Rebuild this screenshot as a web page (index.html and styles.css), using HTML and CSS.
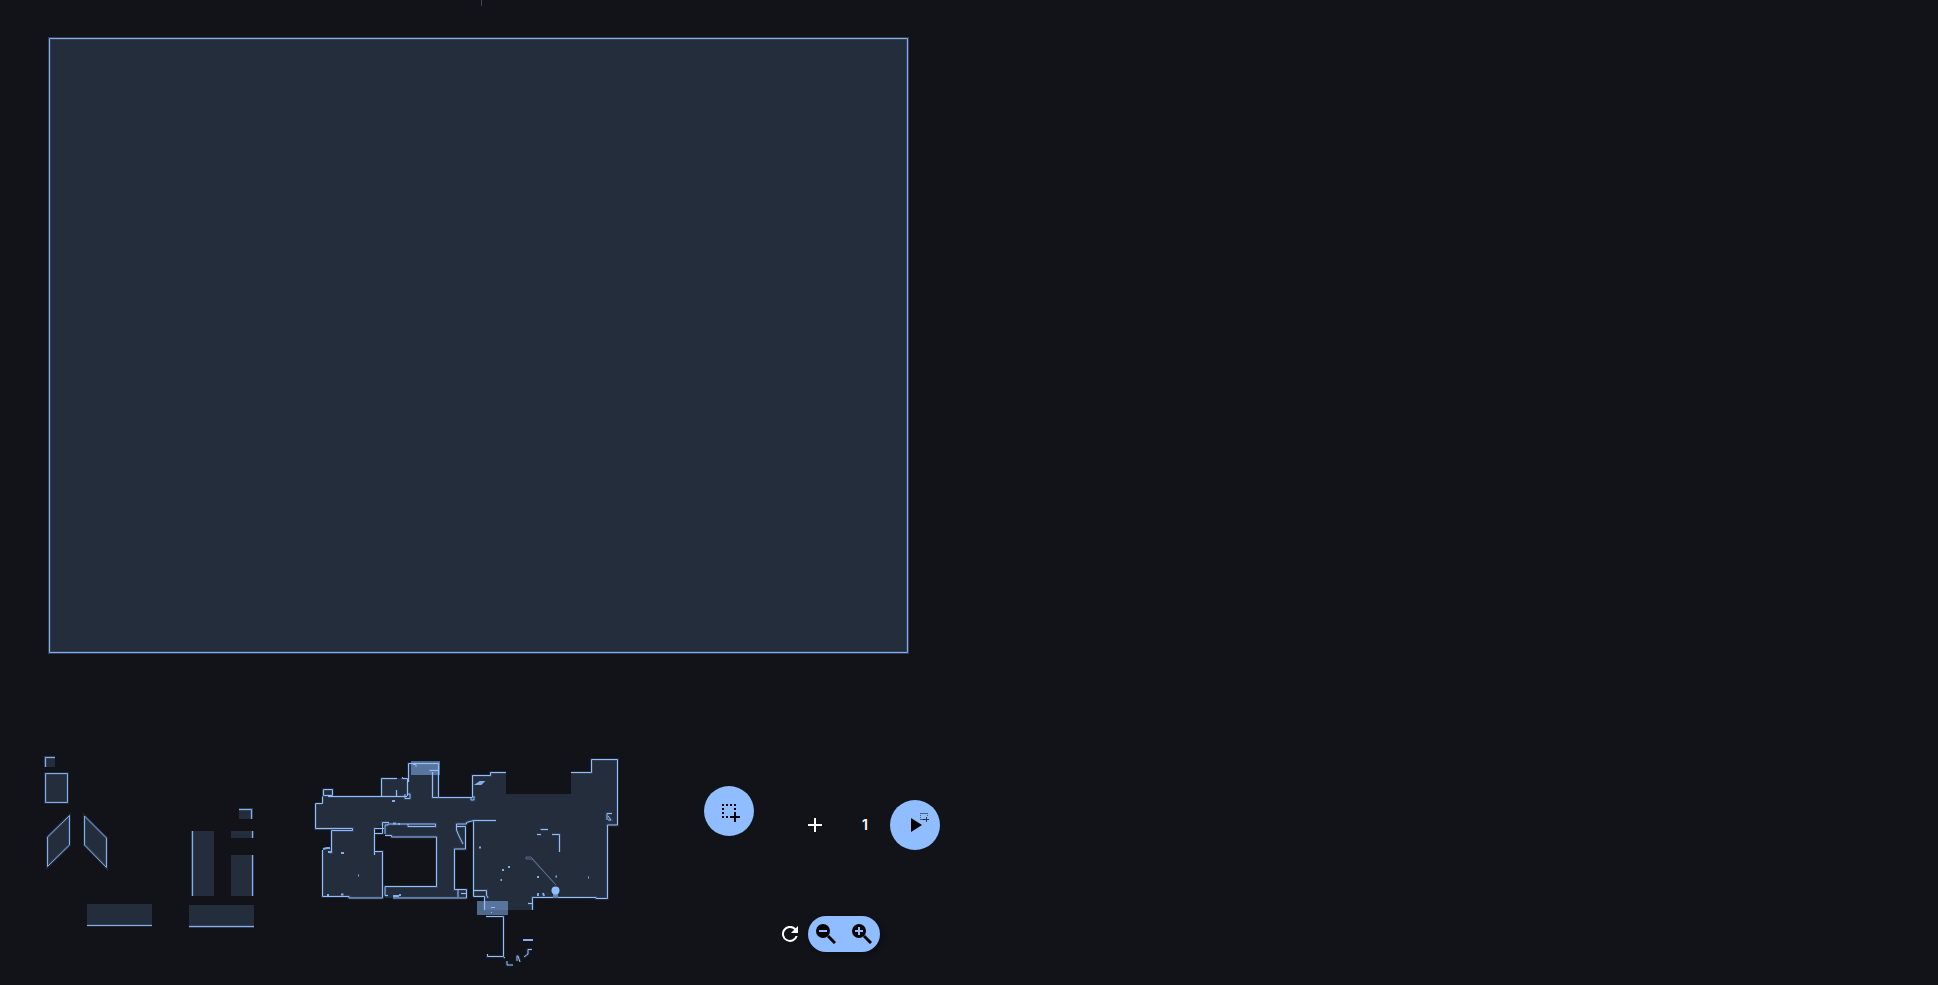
FILE: index.html
```html
<!DOCTYPE html>
<html lang="en">
<head>
<meta charset="utf-8">
<title>Floor map</title>
<link rel="stylesheet" href="styles.css">
</head>
<body>
<main class="viewer">
<svg class="map" role="img" aria-label="Floor map">
  <defs>
    <g id="zones">
      <path d="M49.5 38.5H907.5V652.5H49.5Z"/>
      <path d="M45.5 767V757.5H55M45.5 773.5H67.5V802.5H45.5Z"/>
      <path d="M69.5 815.5V845L47.5 866.5V837ZM84.5 816L106.5 838V867.5L84.5 845Z"/>
      <path d="M87 925.5H152M189 926.5H254M192.5 831V896M252.5 831V838M252.5 855V896M239 809.5H251.5V819"/>
    </g>
    <g id="walls">
      <path d="M328 796.5H407M322.5 803.5V796.5M323.5 789.5H332.5V795.5H323.5ZM315.5 803.5H322.5M315.5 803.5V828.5H352.5V830.5H331.5V852.5H329M322.5 850V896.5H349V898H382.5V851.5H374.5M374.5 855V828.5H384M374.5 833.5H382.5V822.5H389"/>
      <path d="M381.5 796V778.5H397M402.5 777V778.5H407.5V796M396.5 790V796M405 794V798.5H410V794H407M408.5 782V763.5H438.5V797.5H472.5V775.5H490.5V772.5H506M432.5 772V797.5H438M429.5 770.5H438M471 797V800H474V796"/>
      <path d="M571 772.5H591.5V759.5H617.5V825H607.5V898.5H596V897.5H532.5V910M473.5 896.5V820.5H496M473.5 820.5L466.5 822.5V824H456.5V830L459 836L463 844M457 826.5H465.5V849H454.5V889.5H466.5V898H393M458 890V897M461 893.5H466"/>
      <path d="M385 834V825H388V824H435.5V826.5H408V824M385 835.5H391.5V837H436.5V886.5H385V895.5H388"/>
      <path d="M473.5 890.5H486.5V895L488 898M473.5 896.5H484.5V910M552 834.5H559.5V852M541 830V829.5H548M537 834.5H541M528 903.5H533M486 916.5H503.5V956.5H487.5V954M503.5 957L505 958M507 961V965H513M517 961V956H518L520 962M524 957L528 954V949.5H532M607 820V813.5H612M608 816L611 820H608"/>
    </g>
  </defs>
  <g class="fill">
    <path d="M48 37H909V654H48ZM44 756H55V767H44ZM45 773H68V803H45ZM70 815V845L47 867V837ZM84 816L107 838V868L84 845ZM87 904H152V926H87ZM189 905H254V928H189ZM191 831H214V896H191ZM231 831H254V838H231ZM231 855H254V896H231ZM239 808H253V819H239Z"/>
    <path d="M315 803H322V790H332V796H381V778H408V763H439V797H472V775H490V772H506V794H571V772H591V759H618V825H608V898H596V897H533V910H484V897H473V821L466 824V849H454V889H467V898H385V886H436V837H392V835H385V825L374 828V851H383V898H349V896H322V850L331 848V830H315Z"/>
  </g>
  <use href="#zones" class="halo"/><use href="#walls" class="halo"/>
  <use href="#zones" class="line"/><use href="#walls" class="wall"/>
  <g class="overlay"><path d="M411 761H440V775H411ZM477 901H508V915H477Z"/></g>
  <path class="wall" d="M413 764.5H416V767M491 907.5H495M491 912.5H492"/>
  <path class="light" d="M393 823.5H396M398 824H400M341 853H344M341 894.5H343.5M328 894V896M323 849L327 848H330M328 852H331M392 801H395M358 875.5H359M477 784L480 782H483L481 784ZM503 869V871M509 866V868M538 876V878M538 893V896M543 893L544 896M479 847.5H481M500.5 880H502M555.5 876.5H557M588 877.5H589M393 896H399M400 894V896M523 940H533"/>
  <path class="trail" d="M556 885L531 857H526V859H532L555 884"/>
  <path class="base" d="M553 892H558V898H553Z"/>
  <circle class="robot" cx="555.5" cy="890.5" r="4"/>
  <path class="tick" d="M481.5 0V6"/>
</svg>
<button class="round area" aria-label="Select area">
<svg viewBox="0 0 18 18" width="18" height="18"><path d="M0 0h2v2H0zM4 0h2v2H4zM8 0h2v2H8zM12 0h2v2h-2zM0 4h2v2H0zM12 4h2v2h-2zM0 8h2v2H0zM12 8h2v10h-2zM0 12h2v2H0zM4 12h2v2H4zM8 12h10v2H8z"/></svg>
</button>
<div class="run">
<button class="plain" aria-label="Add repeat"><svg viewBox="0 0 14 14" width="14" height="14"><path d="M6 0h2v6h6v2H8v6H6V8H0V6h6z"/></svg></button>
<output class="count">1</output>
<button class="round" aria-label="Start area cleaning"><svg viewBox="0 0 50 50" width="50" height="50"><path d="M21 18l11 7-11 7z"/><g class="faint"><path d="M30 13h8v1h-8zM30 15h1v1h-1zM30 17h1v1h-1zM37 15h1v1h-1zM30 19h5v1h-5z"/></g><path d="M36 17h1v2h2v1h-2v2h-1v-2h-3v-1h3z" opacity=".7"/></svg></button>
</div>
<div class="tools">
<button class="plain" aria-label="Reset view"><svg viewBox="0 0 16 16" width="16" height="16"><path d="M13.7 2.3A8 8 0 1 0 15.7 10h-2.1A6 6 0 1 1 12.2 3.8L9 7h7V0z"/></svg></button>
<div class="zoom">
<button class="plain" aria-label="Zoom out"><svg viewBox="0 0 20 20" width="20" height="20"><circle cx="7" cy="7" r="7"/><path class="stem" d="M12 12l7 7"/><path class="sign" d="M3 7h8"/></svg></button>
<button class="plain" aria-label="Zoom in"><svg viewBox="0 0 20 20" width="20" height="20"><circle cx="7" cy="7" r="7"/><path class="stem" d="M12 12l7 7"/><path class="sign" d="M3 7h8M7 3v8"/></svg></button>
</div>
</div>
</main>
</body>
</html>
```
FILE: styles.css
```css
body { margin: 0; background: #111318; color: #fff; font-family: Inter, "Noto Sans", sans-serif; }
.viewer { position: relative; height: 100vh; overflow: hidden; }
.map { display: block; width: 100%; height: 100%; fill: none; }
.fill { fill: #242d3b; }
.halo { stroke: #8fbdff; stroke-opacity: .13; stroke-width: 3; }
.line { stroke: #80aeeb; stroke-width: 1; }
.wall { stroke: #8fbdff; stroke-width: 1; }
.light { stroke: #82aee9; stroke-width: 2; }
.overlay { fill: #8fbdff; fill-opacity: .5; }
.trail { stroke: #566b8b; stroke-width: 1; }
.base { fill: #6384b3; }
.robot { fill: #8fbdff; }
.tick { stroke: #3c4859; }
button { border: 0; padding: 0; margin: 0; color: inherit; background: none; display: flex; align-items: center; justify-content: center; cursor: pointer; }
button svg { display: block; fill: currentColor; }
.round { width: 50px; height: 50px; border-radius: 50%; background: #8fbdff; color: #000; }
.area { position: absolute; left: 704px; top: 786px; }
.area svg { margin: 4px 0 0 4px; }
.run { position: absolute; left: 790px; top: 800px; display: flex; align-items: center; }
.run .plain { width: 50px; height: 50px; }
.count { width: 50px; text-align: center; font-size: 14px; line-height: 20px; font-weight: 600; }
.faint { opacity: .5; }
.tools { position: absolute; left: 772px; top: 916px; display: flex; align-items: center; }
.tools > .plain { width: 36px; height: 36px; }
.zoom { display: flex; width: 72px; height: 36px; border-radius: 18px; background: #8fbdff; color: #000; box-shadow: 2px 2px 4px #0c0e12; }
.zoom button { width: 36px; height: 36px; }
.stem { stroke: #000; stroke-width: 3; }
.sign { stroke: #8fbdff; stroke-width: 2; }
```
